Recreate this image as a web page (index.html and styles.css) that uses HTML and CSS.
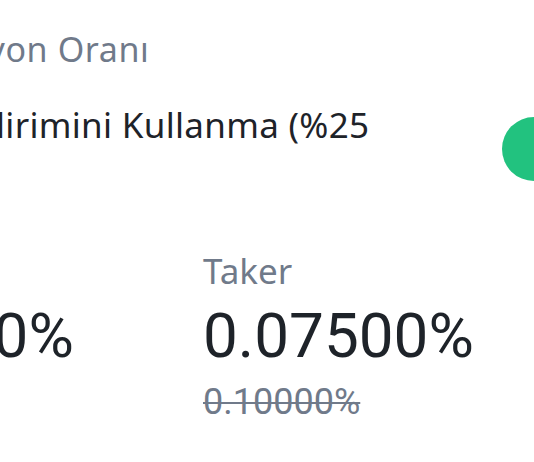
FILE: index.html
```
<!DOCTYPE html>
<html lang="tr">
<head>
  <meta charset="UTF-8">
  <meta name="viewport" content="width=device-width, initial-scale=1.0">
  <title>Komisyon Oranı</title>
  <link rel="stylesheet" href="styles.css">
</head>
<body>
  <div class="screen">
    <!-- Fee settings -->
    <div class="section-title">Komisyon Oranı</div>

    <div class="setting-row">
      <div class="setting-label">BNB İndirimini Kullanma (%25 İndirim)</div>
      <div class="switch on">
        <span class="knob"></span>
      </div>
    </div>

    <!-- Maker / Taker rates -->
    <div class="rates">
      <div class="rate">
        <div class="rate-name">Maker</div>
        <div class="rate-value">0.07500%</div>
        <div class="rate-old">0.10000%</div>
      </div>
      <div class="rate">
        <div class="rate-name">Taker</div>
        <div class="rate-value">0.07500%</div>
        <div class="rate-old">0.10000%</div>
      </div>
    </div>
  </div>
</body>
</html>
```

FILE: styles.css
```
* {
  margin: 0;
  padding: 0;
  box-sizing: border-box;
}

html,
body {
  overflow: hidden;
}

body {
  font-family: "Noto Sans", "Open Sans", sans-serif;
  background-color: white;
  color: #1E2329;
  width: 534px;
  height: 462px;
}

.screen {
  padding-top: 25px;
}

.section-title {
  margin-left: -114px;
  font-size: 34px;
  line-height: 48px;
  letter-spacing: 0.6px;
  color: #707A8A;
  white-space: nowrap;
}

.setting-row {
  display: flex;
  align-items: center;
  margin-top: 28px;
}

.setting-label {
  flex-shrink: 0;
  width: 530px;
  margin-left: -133px;
  font-size: 35px;
  line-height: 48px;
  letter-spacing: 0.3px;
}

.switch {
  flex-shrink: 0;
  position: relative;
  width: 112px;
  height: 64px;
  margin-left: 105px;
  border-radius: 32px;
  background-color: #E6E8EA;
}

.switch.on {
  background-color: #22C27F;
}

.switch .knob {
  position: absolute;
  top: 6px;
  right: 6px;
  width: 52px;
  height: 52px;
  border-radius: 50%;
  background-color: white;
}

.rates {
  display: grid;
  grid-template-columns: 400px 400px;
  margin-top: 50px;
  margin-left: -197px;
}

.rate-name {
  font-size: 35px;
  line-height: 48px;
  color: #707A8A;
}

.rate-value {
  margin-top: 5px;
  font-family: Roboto, "Noto Sans", sans-serif;
  font-size: 62px;
  line-height: 72px;
  color: #1E2329;
}

.rate-old {
  margin-top: 8px;
  font-family: Roboto, "Noto Sans", sans-serif;
  font-size: 36px;
  line-height: 44px;
  color: #707A8A;
  text-decoration: line-through;
  text-decoration-thickness: 2px;
}
```
